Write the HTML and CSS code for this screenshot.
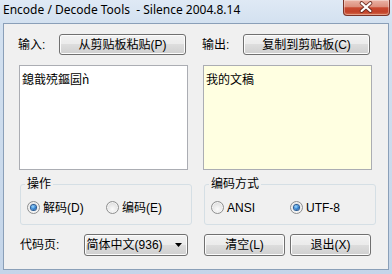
FILE: index.html
```html
<!DOCTYPE html>
<html lang="zh-CN">
<head>
    <meta charset="UTF-8">
    <title>Encode / Decode Tools - Silence 2004.8.14</title>
    <link rel="stylesheet" href="styles.css">
</head>
<body>
    <div class="window">
        <div class="titlebar">
            <span class="title">Encode / Decode Tools  - Silence 2004.8.14</span>
            <div class="close">
                <svg width="47" height="16" viewBox="0 0 47 16">
                    <path d="M19 3 L28 11 M28 3 L19 11" stroke="#6a2a20" stroke-width="4" stroke-linecap="round"/>
                    <path d="M19 3 L28 11 M28 3 L19 11" stroke="#ffffff" stroke-width="2.2" stroke-linecap="round"/>
                </svg>
            </div>
        </div>

        <div class="client">
            <!-- Input side -->
            <div class="col">
                <div class="row">
                    <span class="label">输入:</span>
                    <button class="btn btn-wide">从剪贴板粘贴(P)</button>
                </div>
                <div class="text">鎴戠殑鏂囩ǹ</div>
                <fieldset class="group">
                    <legend>操作</legend>
                    <div class="radios">
                        <label class="radio"><span class="dot checked"></span>解码(D)</label>
                        <label class="radio"><span class="dot"></span>编码(E)</label>
                    </div>
                </fieldset>
                <div class="row row-bottom">
                    <span class="label label-code">代码页:</span>
                    <div class="select">
                        <span>简体中文(936)</span>
                        <svg width="7" height="4" viewBox="0 0 7 4"><path d="M0 0 H7 L3.5 4 Z" fill="#000"/></svg>
                    </div>
                </div>
            </div>

            <!-- Output side -->
            <div class="col">
                <div class="row">
                    <span class="label">输出:</span>
                    <button class="btn btn-wide">复制到剪贴板(C)</button>
                </div>
                <div class="text text-out">我的文稿</div>
                <fieldset class="group">
                    <legend>编码方式</legend>
                    <div class="radios">
                        <label class="radio"><span class="dot"></span>ANSI</label>
                        <label class="radio"><span class="dot checked"></span>UTF-8</label>
                    </div>
                </fieldset>
                <div class="row row-bottom actions">
                    <button class="btn btn-small">清空(L)</button>
                    <button class="btn btn-small">退出(X)</button>
                </div>
            </div>
        </div>
    </div>
</body>
</html>
```

FILE: styles.css
```css
* {
    margin: 0;
    padding: 0;
    box-sizing: border-box;
}

html, body {
    width: 392px;
    height: 274px;
    overflow: hidden;
}

body {
    font-family: "Liberation Sans", "Noto Sans CJK SC", sans-serif;
    font-size: 12px;
    color: #000;
}

/* Window frame */
.window {
    width: 392px;
    height: 274px;
    padding: 0 3px 4px 3px;
    background: linear-gradient(#dfe9f5 0px, #d3e1f0 23px, #c4d5e9 100%);
    display: flex;
    flex-direction: column;
}

.titlebar {
    height: 23px;
    display: flex;
    justify-content: space-between;
    align-items: flex-start;
}

.title {
    font-family: "Noto Sans", sans-serif;
    font-size: 12px;
    line-height: 16px;
    padding-top: 2px;
    white-space: pre;
}

.close {
    width: 47px;
    height: 16px;
    margin-right: -1px;
    border: 1px solid #7a3328;
    border-top: none;
    border-radius: 0 0 4px 4px;
    background: linear-gradient(#ebb3a5 0%, #dc8f7d 45%, #c9482f 52%, #c2422a 80%, #d8714f 100%);
    box-shadow: inset 0 0 0 1px rgba(255, 255, 255, 0.35);
    display: flex;
}

.close svg {
    margin-left: -1px;
}

/* Client area */
.client {
    flex: 1;
    border: 1px solid #8a9fb8;
    background: #f0f0f0;
    padding: 10px 15px 0 15px;
    display: flex;
    gap: 15px;
}

.col {
    width: 169px;
    display: flex;
    flex-direction: column;
}

.row {
    height: 21px;
    display: flex;
    align-items: center;
}

.label {
    width: 41px;
    margin-left: -1px;
    line-height: 14px;
}

.label-code {
    width: 64px;
    margin-left: 1px;
}

/* Win7 style push button */
.btn {
    height: 21px;
    border: 1px solid #707070;
    border-radius: 3px;
    background: linear-gradient(#f2f2f2 0%, #ebebeb 50%, #dddddd 50%, #cfcfcf 100%);
    box-shadow: inset 0 0 0 1px #fcfcfc;
    font-family: inherit;
    font-size: 12px;
    color: #000;
    line-height: 14px;
}

.btn-wide {
    width: 127px;
}

.btn-small {
    width: 81px;
    height: 22px;
}

/* Text boxes */
.text {
    margin-top: 10px;
    height: 105px;
    border: 1px solid #abadb3;
    background: #fff;
    padding: 6px 2px;
    font-family: "Noto Sans CJK SC", sans-serif;
    font-size: 12px;
    line-height: 14px;
}

.text-out {
    background: #ffffe1;
}

/* Group boxes */
.group {
    margin: 7px 0 0 1px;
    height: 48px;
    border: 1px solid #d5dfe5;
    border-radius: 3px;
    padding: 0 6px;
}

.group legend {
    padding: 0 2px;
    margin-left: -2px;
    line-height: 14px;
}

.radios {
    display: flex;
    height: 13px;
    margin-top: 10px;
    align-items: center;
}

.radio {
    width: 79px;
    display: flex;
    align-items: center;
    gap: 3px;
    line-height: 14px;
}

.dot {
    width: 13px;
    height: 13px;
    border: 1px solid #8e8f8f;
    border-radius: 50%;
    background: radial-gradient(circle at 50% 65%, #fbfbfb 0%, #e6e6e6 55%, #cfcfcf 100%);
    box-shadow: inset 0 0 0 1px #f4f4f4;
    display: flex;
    align-items: center;
    justify-content: center;
    flex-shrink: 0;
}

.dot.checked::after {
    content: "";
    width: 5px;
    height: 5px;
    border-radius: 50%;
    background: radial-gradient(circle at 40% 35%, #9fdcff 0%, #2f7fd0 55%, #123f78 100%);
    box-shadow: 0 0 0 1px #2a5c94;
}

/* Bottom row */
.row-bottom {
    margin-top: 9px;
    height: 22px;
}

.select {
    width: 105px;
    height: 22px;
    border: 1px solid #707070;
    border-radius: 3px;
    background: linear-gradient(#f2f2f2 0%, #ebebeb 50%, #dddddd 50%, #cfcfcf 100%);
    box-shadow: inset 0 0 0 1px #fcfcfc;
    padding: 0 5px 0 2px;
    display: flex;
    align-items: center;
    justify-content: space-between;
    line-height: 14px;
}

.actions {
    gap: 5px;
    padding-left: 1px;
}
```
